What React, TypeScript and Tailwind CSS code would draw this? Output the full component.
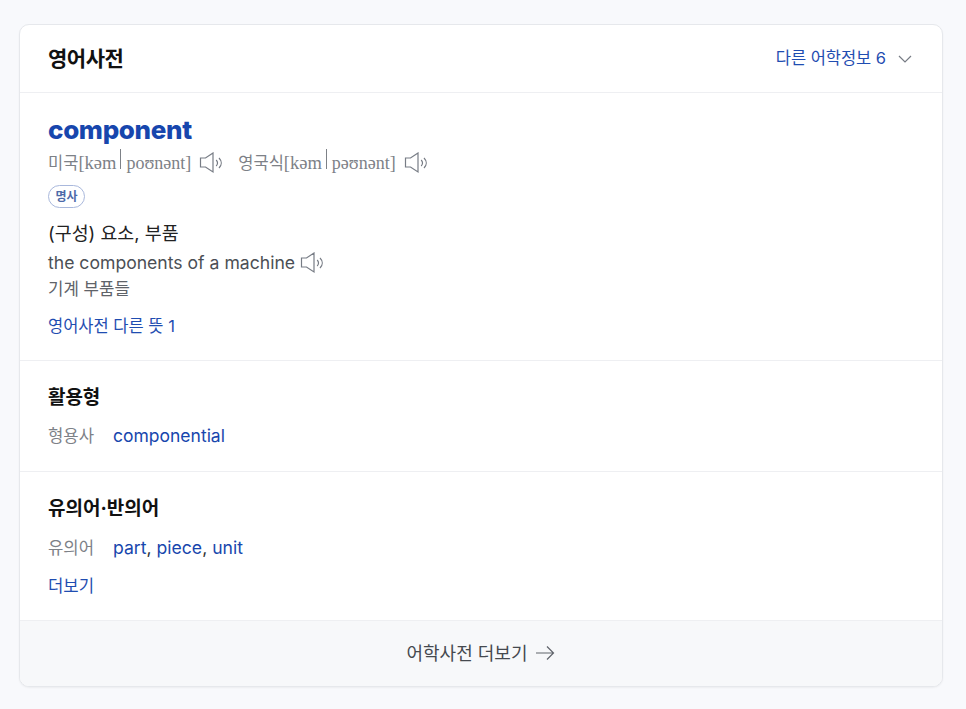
const sans = "font-['Inter','Noto_Sans_CJK_KR',sans-serif]";

function Speaker() {
  return (
    <svg width="24" height="22" viewBox="0 0 24 22" fill="none" stroke="#777c85" strokeWidth="1.2" className="shrink-0">
      <path d="M1.5 6H6.5L14 1V20L6.5 15H1.5Z" strokeLinejoin="miter" />
      <path d="M17.2 8C18.8 9.8 18.8 12.2 17.2 14" />
      <path d="M20 6C23 9 23 13 20 16" />
    </svg>
  );
}

function Phonetic({ label, a, b }: { label: string; a: string; b: string }) {
  return (
    <div className="flex items-center text-[#7d8187]">
      <span className="text-[16.5px] leading-6">{label}</span>
      <span className="font-['Liberation_Serif',serif] text-[18.5px] leading-6">[{a}</span>
      <span className="mb-[9px] ml-[4px] mr-[5px] h-[20px] w-px bg-[#7d8187]" />
      <span className="font-['Liberation_Serif',serif] text-[18px] leading-6">{b}]</span>
      <span className="ml-[8px]"><Speaker /></span>
    </div>
  );
}

export default function App() {
  return (
    <div className={`${sans} min-h-[709px] bg-[#f8f9fc] px-[19px] pt-6`}>
      <div className="w-[924px] overflow-hidden rounded-[10px] border border-[#e6e8ec] bg-white shadow-[0_1px_2px_rgba(0,0,0,0.05)]">
        <header className="flex h-[68px] items-center justify-between border-b border-[#eeeff2] pl-7 pr-[30px]">
          <h2 className="text-[21px] font-bold tracking-[-0.5px] text-[#111]">영어사전</h2>
          <div className="flex items-center text-[#1f4db1]">
            <span className="text-[16.5px] tracking-[-0.05px]">다른 어학정보 6</span>
            <svg width="14" height="8" viewBox="0 0 14 8" fill="none" stroke="#777c85" strokeWidth="1.2" className="ml-[12px]">
              <path d="M1 1L7 7L13 1" />
            </svg>
          </div>
        </header>

        <section className="h-[268px] border-b border-[#eeeff2] pl-7 pt-[19px]">
          <h1 className="text-[26px] font-extrabold leading-[36px] tracking-[-0.35px] text-[#1746ad]">component</h1>
          <div className="mt-[2px] flex h-[26px] items-center gap-[15px]">
            <Phonetic label="미국" a="kəm" b="poʊnənt" />
            <Phonetic label="영국식" a="kəm" b="pəʊnənt" />
          </div>
          <span className="mt-[9px] flex h-[23px] w-[37px] items-center justify-center rounded-full border border-[#a9b8dc] text-[12px] font-bold text-[#4d6aa9]">명사</span>
          <p className="mt-[12px] text-[18.4px] leading-[26px] text-[#222]">(구성) 요소, 부품</p>
          <div className="mt-[5px] flex h-6 items-center text-[#4b4f55]">
            <span className="text-[17.6px]">the components of a machine</span>
            <span className="ml-[5px]"><Speaker /></span>
          </div>
          <p className="mt-[2px] text-[16.8px] leading-6 text-[#5f6369]">기계 부품들</p>
          <p className="mt-[13px] text-[16.5px] leading-6 text-[#1f4db1]">영어사전 다른 뜻 1</p>
        </section>

        <section className="h-[111px] border-b border-[#eeeff2] pl-7 pt-[24px]">
          <h3 className="text-[19px] font-bold leading-[26px] tracking-[-0.1px] text-[#111]">활용형</h3>
          <div className="mt-[13px] flex items-center leading-6">
            <span className="w-[65px] text-[16.7px] text-[#7d8187]">형용사</span>
            <span className="text-[17.5px] text-[#1746ad]">componential</span>
          </div>
        </section>

        <section className="h-[148px] pl-7 pt-[24px]">
          <h3 className="text-[19px] font-bold leading-[26px] text-[#111]">유의어·반의어</h3>
          <div className="mt-[14px] flex items-center leading-6">
            <span className="w-[65px] text-[16.7px] text-[#7d8187]">유의어</span>
            <span className="text-[17.6px] text-[#1746ad]">part<span className="text-[#333]">, </span>piece<span className="text-[#333]">, </span>unit</span>
          </div>
          <p className="mt-[14px] text-[16.7px] leading-6 text-[#1f4db1]">더보기</p>
        </section>

        <footer className="flex h-[66px] items-center justify-center gap-[8px] border-t border-[#eeeff2] bg-[#f7f8fa] text-[#45494f]">
          <span className="text-[18px]">어학사전 더보기</span>
          <svg width="20" height="16" viewBox="0 0 20 16" fill="none" stroke="#60646b" strokeWidth="1.2" className="-mt-[1px]">
            <path d="M1 8H18.5M12 1.5L18.5 8L12 14.5" />
          </svg>
        </footer>
      </div>
    </div>
  );
}
